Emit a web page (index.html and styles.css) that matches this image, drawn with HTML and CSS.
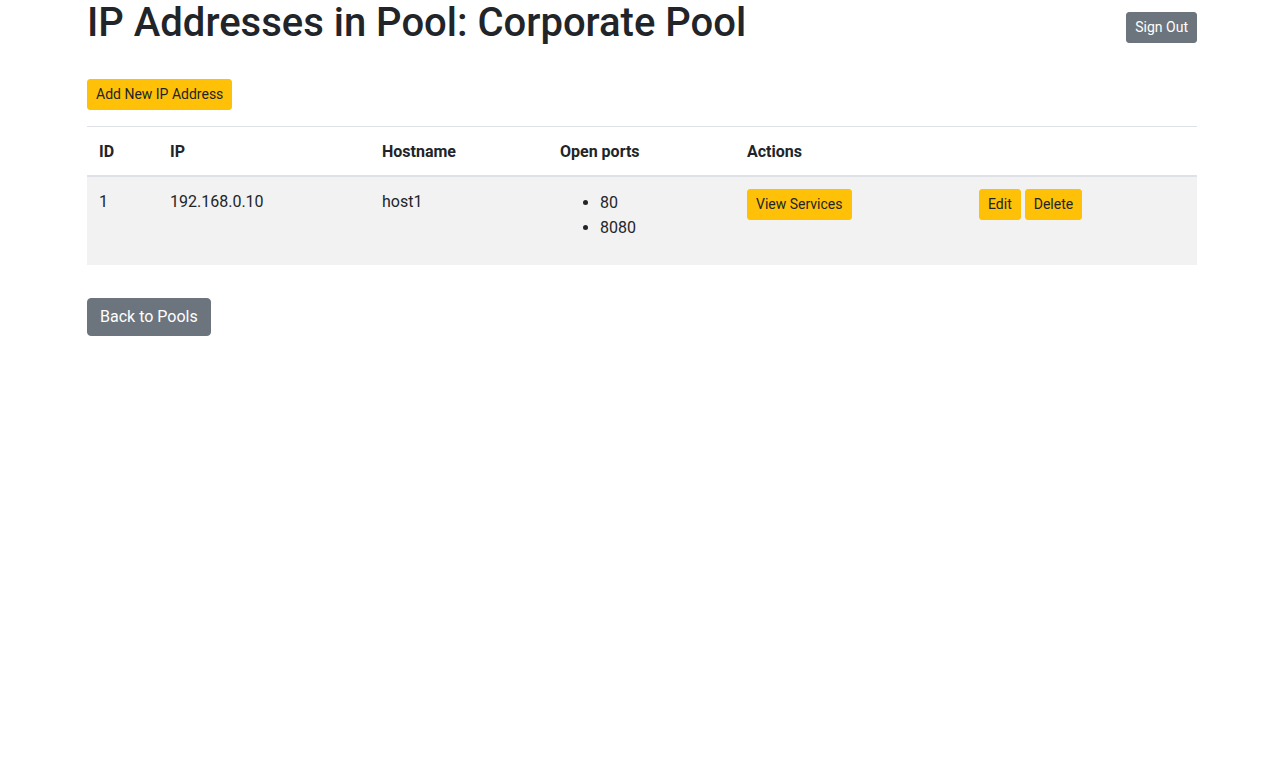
FILE: index.html
```html
<!DOCTYPE html>
<html lang="en">
<head>
<meta charset="utf-8">
<title>IP Addresses in Pool: Corporate Pool</title>
<link rel="stylesheet" href="styles.css">
</head>
<body>
<div class="container">
  <div class="header">
    <h1 class="title">IP Addresses in Pool: Corporate Pool</h1>
    <button class="btn btn-sm btn-secondary signout">Sign Out</button>
  </div>
  <div class="toolbar">
    <button class="btn btn-sm btn-warning">Add New IP Address</button>
  </div>
  <table class="table">
    <colgroup>
      <col class="c-id"><col class="c-ip"><col class="c-host"><col class="c-ports"><col class="c-act"><col class="c-act2">
    </colgroup>
    <thead>
      <tr><th>ID</th><th>IP</th><th>Hostname</th><th>Open ports</th><th>Actions</th><th></th></tr>
    </thead>
    <tbody>
      <tr class="striped">
        <td>1</td>
        <td>192.168.0.10</td>
        <td>host1</td>
        <td><ul class="ports"><li>80</li><li>8080</li></ul></td>
        <td><button class="btn btn-sm btn-warning">View Services</button></td>
        <td><div class="row-actions"><button class="btn btn-sm btn-warning">Edit</button><button class="btn btn-sm btn-warning">Delete</button></div></td>
      </tr>
    </tbody>
  </table>
  <div class="footer">
    <button class="btn btn-secondary">Back to Pools</button>
  </div>
</div>
</body>
</html>
```
FILE: styles.css
```css
* { box-sizing: border-box; }
html, body { margin: 0; padding: 0; }
body {
  font-family: Roboto, "Liberation Sans", sans-serif;
  font-size: 16px;
  line-height: 1.5;
  color: #212529;
  background: #fff;
}
.container {
  width: 1110px;
  margin-left: 87px;
}
.header {
  display: flex;
  justify-content: space-between;
  align-items: flex-start;
}
.title {
  margin: 0;
  font-size: 40px;
  font-weight: 500;
  line-height: 48px;
  margin-top: -1px;
}
.signout { margin-top: 12px; }
.toolbar {
  margin-top: 32px;
  margin-bottom: 16px;
}
.btn {
  display: inline-block;
  font-family: inherit;
  font-weight: 400;
  border: 1px solid transparent;
  border-radius: 4px;
  padding: 6px 12px;
  font-size: 16px;
  line-height: 24px;
  cursor: pointer;
  vertical-align: middle;
}
.btn-sm {
  padding: 4px 8px;
  font-size: 14px;
  line-height: 21px;
  border-radius: 3px;
}
.btn-warning { background: #ffc107; border-color: #ffc107; color: #212529; }
.btn-secondary { background: #6c757d; border-color: #6c757d; color: #fff; }
.table {
  width: 1110px;
  border-collapse: collapse;
  table-layout: fixed;
  margin-bottom: 33px;
}
.c-id { width: 71px; }
.c-ip { width: 212px; }
.c-host { width: 178px; }
.c-ports { width: 187px; }
.c-act { width: 232px; }
.c-act2 { width: 230px; }
.table th, .table td {
  padding: 13px 12px 11px;
  text-align: left;
  vertical-align: top;
  border-top: 1px solid #dee2e6;
}
.table td .btn-sm { margin-top: -1px; }
.table th { font-weight: 700; }
.table thead th {
  border-bottom: 2px solid #dee2e6;
}
.striped { background: #f2f2f2; }
.ports {
  margin: 0 0 14px 0;
  padding-left: 40px;
  line-height: 25px;
}
.row-actions {
  display: flex;
  gap: 4px;
}
```
